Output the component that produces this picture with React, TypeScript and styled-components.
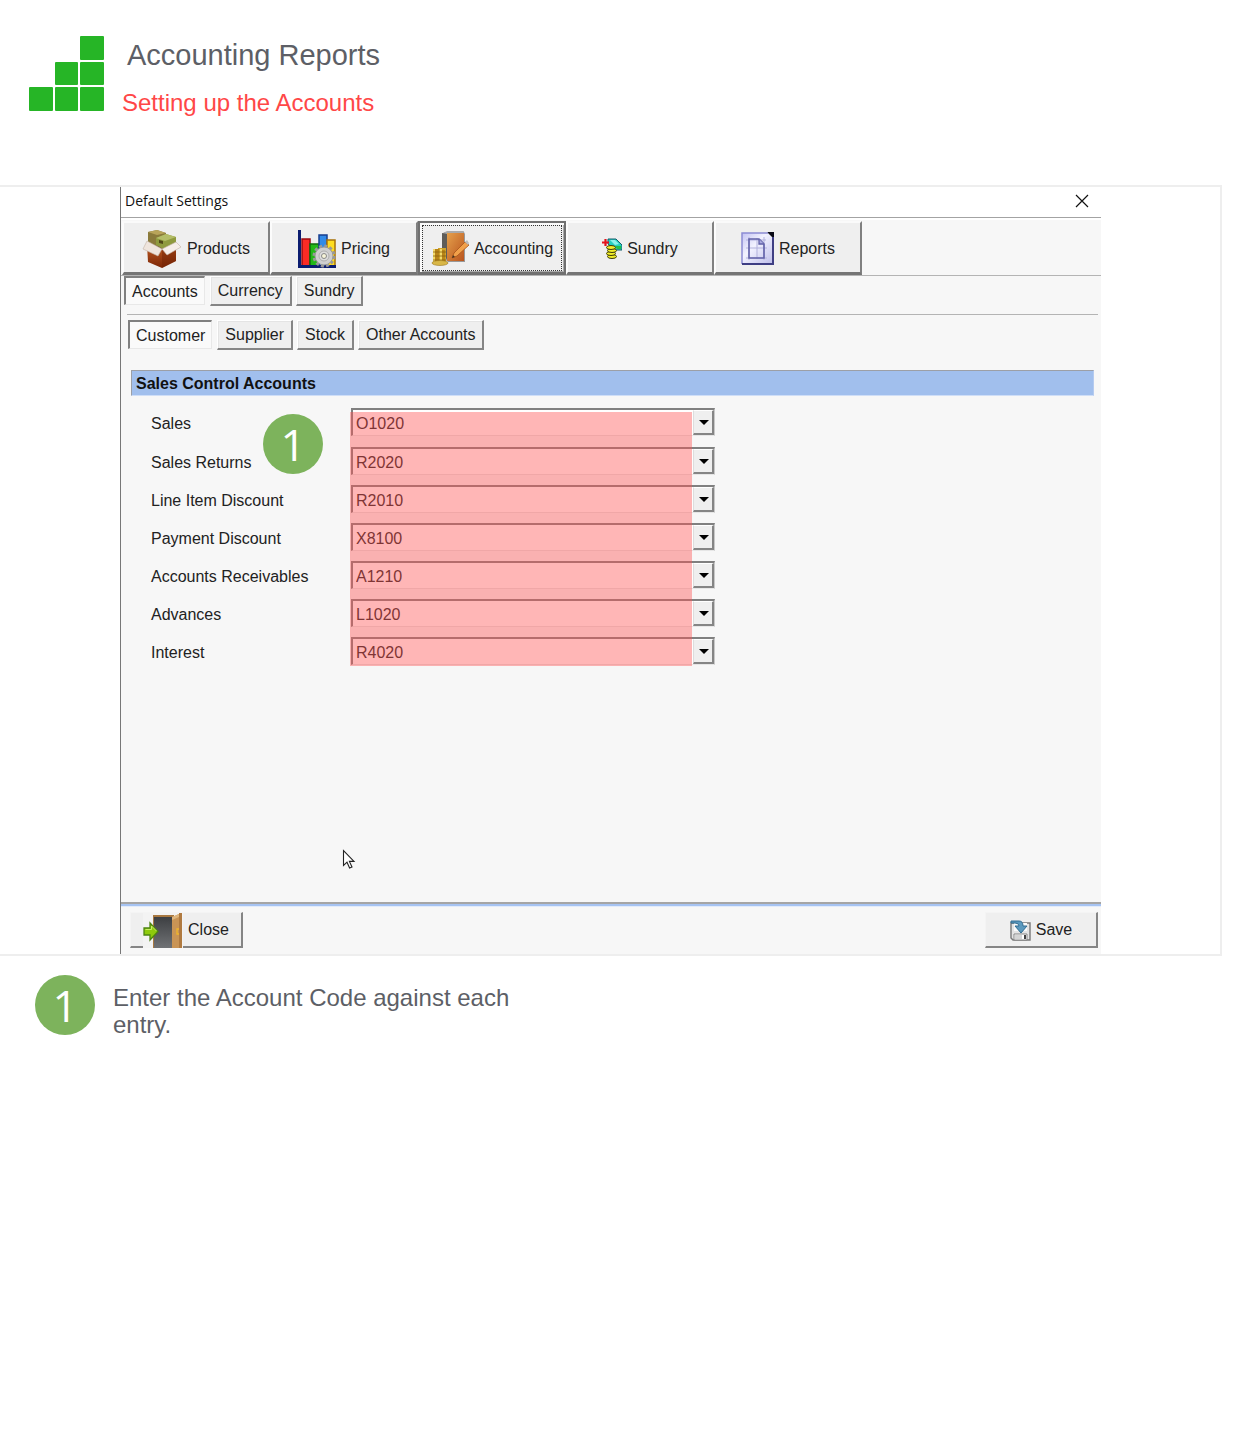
import React from "react";
import styled, { createGlobalStyle, css } from "styled-components";

const GlobalStyle = createGlobalStyle`
  *, *::before, *::after { box-sizing: border-box; }
  body {
    margin: 0;
    background: #fff;
    font-family: "Liberation Sans", Arial, sans-serif;
    color: #222;
  }
  button, select { font: inherit; color: inherit; }
`;

const Header = styled.header`
  display: flex;
  gap: 18px;
  height: 185px;
  padding: 36px 29px 0;
`;

const Titles = styled.div`
  padding-top: 2px;
`;

const Title = styled.h1`
  margin: 0;
  padding-left: 5px;
  font-size: 29px;
  line-height: 34px;
  font-weight: 400;
  color: #5d5f66;
`;

const Subtitle = styled.h2`
  margin: 17px 0 0;
  font-size: 24px;
  line-height: 28px;
  font-weight: 400;
  color: #ff4747;
`;

const Frame = styled.section`
  margin-right: 13px;
  padding: 0 119px 0 120px;
  border: 2px solid #eee;
  border-left: 0;
`;

const Window = styled.div`
  position: relative;
  border-left: 1px solid #777;
  background: #f7f7f7;
`;

const TitleBar = styled.div`
  display: flex;
  align-items: center;
  justify-content: space-between;
  height: 31px;
  padding: 0 12px 3px 4px;
  border-bottom: 1px solid #a3a3a3;
  background: #fff;
  font-family: "Open Sans", "Noto Sans", sans-serif;
  font-size: 14px;
  color: #111;
`;

const CloseIconButton = styled.button`
  display: flex;
  padding: 0;
  border: 0;
  background: none;
`;

const Toolbar = styled.nav`
  display: flex;
  padding: 1px 0 0 1px;
  border-top: 2px solid #fff;
  border-bottom: 1px solid #b4b4b4;
`;

const ToolButton = styled.button<{ $active?: boolean }>`
  display: flex;
  align-items: center;
  justify-content: center;
  gap: 5px;
  width: 148px;
  height: 54px;
  padding: 2px 0 0;
  border: solid;
  border-width: 2px 2px 3px;
  border-color: #fafafa #808080 #757575 #fcfcfc;
  background: #efefef;
  font-size: 16px;
  white-space: nowrap;
  ${(p) =>
    p.$active &&
    css`
      border-color: #707070;
      box-shadow: inset 2px 2px #fafafa, inset -1px -1px #aaa;
      outline: 1px dotted #333;
      outline-offset: -5px;
    `}
`;

const TabRow = styled.div<{ $level: 1 | 2 }>`
  display: flex;
  gap: 4px;
  padding-left: ${(p) => (p.$level === 1 ? 3 : 7)}px;
  padding-top: ${(p) => (p.$level === 1 ? 0 : 5)}px;
  height: ${(p) => (p.$level === 1 ? 38 : 55)}px;
`;

const Tab = styled.button<{ $active?: boolean }>`
  height: 30px;
  padding: 0 7px;
  border: solid;
  border-width: 1px 2px 2px 1px;
  border-color: #fff #858585 #858585 #fff;
  box-shadow: inset 1px 1px #e4e4e4;
  background: #efefef;
  font-size: 16px;
  line-height: 24px;
  white-space: nowrap;
  ${(p) =>
    p.$active &&
    css`
      height: 29px;
      margin-right: 1px;
      padding: 2px 6px 0;
      border-width: 2px 1px 1px 2px;
      border-color: #808080 #e8e8e8 #e8e8e8 #808080;
      box-shadow: none;
      background: #fafafa;
    `}
`;

const Divider = styled.hr`
  height: 1px;
  margin: 0 3px 0 6px;
  border: 0;
  background: #b4b4b4;
`;

const Banner = styled.h3`
  height: 26px;
  margin: 0 7px 0 10px;
  padding-left: 4px;
  border: 1px solid;
  border-color: #9c9fa6 #b5cbf0 #cfdef7 #9c9fa6;
  background: #a1bfed;
  font-size: 16px;
  line-height: 26px;
  color: #111;
`;

const Form = styled.form`
  position: relative;
  height: 506px;
  padding: 12px 0 0 30px;
`;

const Field = styled.div`
  display: grid;
  grid-template-columns: 200px 364px;
  margin-bottom: 10px;
  &:first-child { margin-bottom: 11px; }
`;

const FieldLabel = styled.label`
  padding-top: 4px;
  font-size: 16px;
  line-height: 24px;
`;

const Combo = styled.div`
  display: grid;
  grid-template-columns: 1fr 21px;
  height: 28px;
  border: solid;
  border-width: 2px 1px 1px 2px;
  border-color: #808080 #c8c8c8 #e6e6e6 #808080;
  background: #fff;
`;

const Select = styled.select`
  grid-area: 1 / 1 / 2 / 3;
  padding: 1px 24px 0 3px;
  border: 0;
  background: none;
  appearance: none;
  font-size: 16px;
`;

const Arrow = styled.span`
  display: flex;
  align-items: center;
  justify-content: center;
  grid-area: 1 / 2;
  padding: 2px 0 0 1px;
  border: solid;
  border-width: 1px 2px 2px 1px;
  border-color: #fff #858585 #858585 #ddd;
  background: #efefef;
  pointer-events: none;
`;

const Highlight = styled.div`
  position: absolute;
  left: 229px;
  top: 16px;
  width: 342px;
  height: 254px;
  background: rgba(255, 81, 81, 0.42);
  pointer-events: none;
`;

const Badge = styled.span`
  display: flex;
  flex: none;
  align-items: center;
  justify-content: center;
  width: 60px;
  height: 60px;
  border-radius: 50%;
  background: #7db35c;
  color: #fff;
  font-family: "Open Sans", "Noto Sans", sans-serif;
  font-size: 44px;
  line-height: 60px;
`;

const FloatingBadge = styled(Badge)`
  position: absolute;
  left: 142px;
  top: 18px;
`;

const Pointer = styled.svg`
  position: absolute;
  left: 221px;
  top: 453px;
`;

const Footer = styled.footer`
  display: flex;
  align-items: flex-start;
  justify-content: space-between;
  height: 52px;
  padding: 5px 3px 0 9px;
  border-top: 2px solid #a5a5a5;
  box-shadow: inset 0 2px #a6c3f2, inset 0 3px #e2ebfa;
`;

const ActionButton = styled.button`
  display: flex;
  align-items: center;
  justify-content: center;
  gap: 5px;
  width: 113px;
  height: 36px;
  margin-top: 3px;
  padding: 1px 0 0;
  border: solid;
  border-width: 1px 2px 2px 1px;
  border-color: #f4f4f4 #858585 #858585 #f4f4f4;
  background: #efefef;
  font-size: 16px;
`;

const Note = styled.div`
  display: flex;
  gap: 18px;
  padding: 19px 35px;
`;

const NoteText = styled.p`
  max-width: 430px;
  margin: 0;
  padding-top: 9px;
  font-size: 24px;
  line-height: 27px;
  color: #5d5f66;
`;

const Logo = () => (
  <svg width="75" height="75" viewBox="0 0 75 75" fill="#26b526" aria-hidden="true">
    <rect x="51" y="0" width="24" height="24" rx="1" />
    <rect x="26" y="26" width="23" height="23" rx="1" />
    <rect x="51" y="26" width="24" height="23" rx="1" />
    <rect x="0" y="51" width="24" height="24" rx="1" />
    <rect x="26" y="51" width="23" height="24" rx="1" />
    <rect x="51" y="51" width="24" height="24" rx="1" />
  </svg>
);

const BoxIcon = () => (
  <svg width="40" height="40" viewBox="0 0 40 40" aria-hidden="true">
    <defs>
      <linearGradient id="boxFront" x1="0" y1="0" x2="0" y2="1">
        <stop offset="0" stopColor="#bd5a22" />
        <stop offset="1" stopColor="#7c2606" />
      </linearGradient>
    </defs>
    <path d="M6 13l15-4 13 4-13 8z" fill="#6b4a2c" />
    <path d="M6 3l9-2 9 3v11l-9 2-9-4z" fill="#8a7a3b" />
    <path d="M6 3l9-2 9 3-9 2z" fill="#b8a45a" />
    <path d="M14 9l10-4 10 3v9l-11 4-9-5z" fill="#8f9a3e" />
    <path d="M14 9l10-4 10 3-11 4z" fill="#b4bd68" />
    <path d="M17 11l4 1v3l-4-1z" fill="#504817" />
    <path d="M5 16l15 5 14-5v16L20 39 6 33z" fill="url(#boxFront)" />
    <path d="M20 21l14-5v16l-14 7z" fill="#6e2105" opacity=".45" />
    <path d="M5 12l15 8-4 7L1 20z" fill="#efe5dd" stroke="#c2b1a5" strokeWidth=".6" />
    <path d="M20 20l14-7 5 5-14 8z" fill="#f6eee8" stroke="#c2b1a5" strokeWidth=".6" />
  </svg>
);

const ChartIcon = () => (
  <svg width="38" height="40" viewBox="0 0 38 40" aria-hidden="true">
    <rect x="4" y="10" width="8" height="27" fill="#fb2b25" stroke="#9a0b12" strokeWidth="1.5" />
    <rect x="12" y="15" width="9" height="22" fill="#22b817" stroke="#116c0d" strokeWidth="1.5" />
    <rect x="21" y="6" width="8" height="31" fill="#318ae7" stroke="#173e8f" strokeWidth="1.5" />
    <rect x="29" y="11" width="8" height="26" fill="#ffdd20" stroke="#a77208" strokeWidth="1.5" />
    <path d="M1.500 1v36.500H38" fill="none" stroke="#0b1c70" strokeWidth="3" />
    <circle cx="26" cy="27" r="10" fill="none" stroke="#999" strokeWidth="3" strokeDasharray="3 2.236" />
    <circle cx="26" cy="27" r="9" fill="#cfcfcf" stroke="#999" />
    <circle cx="26" cy="27" r="5" fill="#dedede" stroke="#adadad" />
    <circle cx="26" cy="27" r="2.500" fill="#f7f4d9" stroke="#888" />
  </svg>
);

const LedgerIcon = () => (
  <svg width="38" height="38" viewBox="0 0 38 38" aria-hidden="true">
    <defs>
      <linearGradient id="ledgerCover" x1="0" y1="0" x2="1" y2="1">
        <stop offset="0" stopColor="#e5a04b" />
        <stop offset="1" stopColor="#b9541e" />
      </linearGradient>
    </defs>
    <path d="M11 4l3-2h19l1 2v28H17L11 27z" fill="#999" />
    <path d="M12 3l4-2h17l-1 3H16z" fill="#aaa" />
    <path d="M16 3h17v28H16z" fill="url(#ledgerCover)" />
    <path d="M11 3l5 1v25l-5-3z" fill="#5f5d59" />
    <path d="M34 12l4 3-12 11-5 2 2-5z" fill="#f1a04a" stroke="#a75319" strokeWidth=".8" />
    <path d="M34 12l2-2 2 3-1 2z" fill="#bbb" />
    <path d="M21 28l1-3 2 2z" fill="#432" />
    <path d="M7 18h8v16H7z" fill="#cfa32a" />
    <path d="M2 19h6v15H2zM9 20h5v13H9z" fill="#b88417" />
    <path d="M3 19v15M10 19v15" stroke="#f3d968" strokeWidth="2" />
    <path d="M2 22h13M2 26h13M2 30h13" stroke="#8b6210" strokeWidth=".8" />
    <ellipse cx="9" cy="33" rx="8" ry="2.500" fill="#d9b747" stroke="#9b771f" strokeWidth=".6" />
  </svg>
);

const CoinsIcon = () => (
  <svg width="20" height="22" viewBox="0 0 20 22" aria-hidden="true">
    <path d="M6 1h8l6 6v5h-6L6 6z" fill="#24cfc0" stroke="#145c6b" />
    <path d="M8 2h5l4 4-4 1z" fill="#8cf1ec" />
    <path d="M13 8h6v3h-4z" fill="#20bf4b" />
    <g fill="#f1ed28" stroke="#3d3b09">
      <ellipse cx="10" cy="18.500" rx="4.500" ry="2" />
      <ellipse cx="9" cy="15.500" rx="4.500" ry="2" />
      <ellipse cx="10" cy="12.500" rx="4.500" ry="2" />
      <ellipse cx="9" cy="9.500" rx="4.500" ry="2" />
    </g>
    <path d="M3.500 1v7M0 4.500h7" stroke="#e3121c" strokeWidth="2.200" />
  </svg>
);

const ReportIcon = () => (
  <svg width="33" height="33" viewBox="0 0 33 33" aria-hidden="true">
    <defs>
      <linearGradient id="reportTile" x1="0" y1="0" x2="1" y2="1">
        <stop offset="0" stopColor="#c3c3f2" />
        <stop offset=".4" stopColor="#f2f2ff" />
        <stop offset="1" stopColor="#bdbde9" />
      </linearGradient>
    </defs>
    <path d="M26 0h7v7z" fill="#090915" />
    <path d="M1 1h25l6 6v25H1z" fill="url(#reportTile)" />
    <path d="M1 32V1h26" fill="none" stroke="#8c8cd4" strokeWidth="1.500" />
    <path d="M1 32h31V5" fill="none" stroke="#3e3e83" strokeWidth="2" />
    <path d="M5 8h20M5 16h21M5 26h21M8 5v23M16 6v21M23 5v23" stroke="#b2b2dd" />
    <path d="M8 7h10l5 5v14H8z" fill="none" stroke="#6060a8" strokeWidth="1.600" />
    <path d="M18 7v5h5" fill="#a9a9de" stroke="#6060a8" strokeWidth="1.300" />
  </svg>
);

const DoorIcon = () => (
  <svg width="40" height="35" viewBox="0 0 40 35" aria-hidden="true">
    <defs>
      <linearGradient id="doorway" x1="0" y1="0" x2="0" y2="1">
        <stop offset="0" stopColor="#3d3f42" />
        <stop offset="1" stopColor="#707275" />
      </linearGradient>
    </defs>
    <path d="M0 0h40v35H0z" fill="#f3f3f3" />
    <path d="M10 2h21v33H10z" fill="#a87840" />
    <path d="M11 4h19v31H11z" fill="url(#doorway)" />
    <path d="M29 4l7-3v34h-7z" fill="#c99455" />
    <path d="M36 0h3v35h-3z" fill="#b07a40" />
    <path d="M29 4l7-3v3l-7 3z" fill="#dfb57c" />
    <path d="M36 16h-2v5h2" fill="none" stroke="#efb52c" strokeWidth="1.300" />
    <path d="M1 15h6v-5l8 8.500L7 27v-5H1z" fill="#8ecb0c" stroke="#4d8511" strokeWidth="1.300" />
    <path d="M2.500 16.500H8.500V13l5 5" fill="none" stroke="#c8ec63" />
  </svg>
);

const SaveIcon = () => (
  <svg width="21" height="21" viewBox="0 0 21 21" aria-hidden="true">
    <path d="M1 3h19v17H3l-2-2z" fill="#e4e4e4" stroke="#787878" strokeWidth="1.400" />
    <path d="M4 3h13v8H4z" fill="#fafafa" />
    <path d="M4 14h13v6H4z" fill="#fff" stroke="#858585" />
    <path d="M5 16h7M5 18h7" stroke="#aaa" />
    <path d="M14 15h2v4h-2z" fill="#444" />
    <path d="M1 1h8q4 0 4 5h4l-6 7-6-7h4q0-3-4-3H1z" fill="#5b99be" stroke="#326d92" />
  </svg>
);

const tools = [
  { name: "Products", Icon: BoxIcon },
  { name: "Pricing", Icon: ChartIcon },
  { name: "Accounting", Icon: LedgerIcon },
  { name: "Sundry", Icon: CoinsIcon },
  { name: "Reports", Icon: ReportIcon },
];

const fields = [
  { id: "sales", label: "Sales", code: "O1020" },
  { id: "returns", label: "Sales Returns", code: "R2020" },
  { id: "line-discount", label: "Line Item Discount", code: "R2010" },
  { id: "payment-discount", label: "Payment Discount", code: "X8100" },
  { id: "receivables", label: "Accounts Receivables", code: "A1210" },
  { id: "advances", label: "Advances", code: "L1020" },
  { id: "interest", label: "Interest", code: "R4020" },
];

const Tabs = ({ level, items }: { level: 1 | 2; items: string[] }) => (
  <TabRow $level={level} role="tablist">
    {items.map((item, i) => (
      <Tab key={item} type="button" role="tab" aria-selected={i === 0} $active={i === 0}>
        {item}
      </Tab>
    ))}
  </TabRow>
);

export default function App() {
  return (
    <>
      <GlobalStyle />
      <Header>
        <Logo />
        <Titles>
          <Title>Accounting Reports</Title>
          <Subtitle>Setting up the Accounts</Subtitle>
        </Titles>
      </Header>
      <main>
        <Frame>
          <Window>
            <TitleBar>
              <span>Default Settings</span>
              <CloseIconButton type="button" aria-label="Close window">
                <svg width="14" height="14" viewBox="0 0 14 14">
                  <path d="M1 1l12 12M13 1L1 13" stroke="#111" strokeWidth="1.200" />
                </svg>
              </CloseIconButton>
            </TitleBar>
            <Toolbar>
              {tools.map(({ name, Icon }) => (
                <ToolButton key={name} type="button" $active={name === "Accounting"}>
                  <Icon />
                  {name}
                </ToolButton>
              ))}
            </Toolbar>
            <Tabs level={1} items={["Accounts", "Currency", "Sundry"]} />
            <Divider />
            <Tabs level={2} items={["Customer", "Supplier", "Stock", "Other Accounts"]} />
            <Banner>Sales Control Accounts</Banner>
            <Form>
              {fields.map((f) => (
                <Field key={f.id}>
                  <FieldLabel htmlFor={f.id}>{f.label}</FieldLabel>
                  <Combo>
                    <Arrow>
                      <svg width="10" height="6" viewBox="0 0 10 6">
                        <path d="M0 0h10L5 5z" fill="#000" />
                      </svg>
                    </Arrow>
                    <Select id={f.id} defaultValue={f.code}>
                      <option>{f.code}</option>
                    </Select>
                  </Combo>
                </Field>
              ))}
              <Highlight />
              <FloatingBadge>1</FloatingBadge>
              <Pointer width="14" height="21" viewBox="0 0 14 21" aria-hidden="true">
                <path
                  d="M1.500 1.500v15l3.500-3.300 2.600 5.800 2.400-1-2.600-5.600h4.600z"
                  fill="#fff"
                  stroke="#222"
                  strokeWidth="1.100"
                />
              </Pointer>
            </Form>
            <Footer>
              <ActionButton type="button">
                <DoorIcon />
                Close
              </ActionButton>
              <ActionButton type="button">
                <SaveIcon />
                Save
              </ActionButton>
            </Footer>
          </Window>
        </Frame>
        <Note>
          <Badge>1</Badge>
          <NoteText>Enter the Account Code against each entry.</NoteText>
        </Note>
      </main>
    </>
  );
}
